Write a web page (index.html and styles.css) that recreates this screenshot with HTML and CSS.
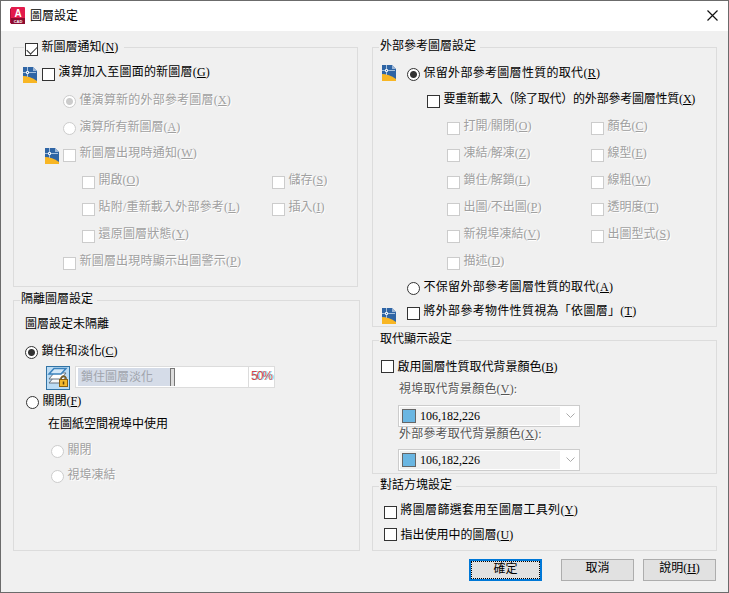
FILE: index.html
```html
<!DOCTYPE html>
<html lang="zh-Hant">
<head>
  <meta charset="UTF-8" />
  <title>圖層設定</title>
  <link rel="stylesheet" href="styles.css">
</head>
<body>
  <div class="dialog">
    <svg class="defs" width="0" height="0">
      <symbol id="dwg" viewBox="0 0 14 16">
        <path fill="#2f65a5" d="M0 0h10l4 4v11H0z"/>
        <path fill="#9db6d6" d="M10 0l4 4h-4z"/>
        <path fill="#f8b624" d="M0 9q7 0 14 5v2H0z"/>
        <path stroke="#a9c3df" fill="none" d="M4.500 0v4M4.500 7v3M0 5.500h3M6 5.500h7"/>
        <path stroke="#f2f6fa" fill="none" d="M3.500 4.500h2v2h-2z"/>
      </symbol>
    </svg>
    <div class="titlebar">
      <svg class="logo" width="15" height="17" viewBox="0 0 15 17">
        <path fill="#b50d3c" d="M0 2l2-2v17l-2-1z"/>
        <rect x="1" width="14" height="17" rx="1" fill="#e31b4c"/>
        <path fill="#8d0c30" d="M1 11h14v6H1z"/>
        <text x="8" y="9.500" class="logo-a">A</text>
        <text x="8" y="15.500" class="logo-cad">CAD</text>
      </svg>
      <span class="title">圖層設定</span>
      <svg class="close" width="11" height="11" viewBox="0 0 11 11"><path d="M.5.5l10 10M10.500.5l-10 10" stroke="#111" stroke-width="1.200"/></svg>
    </div>

    <div class="content">
      <div class="column">
        <div class="group notify">
          <label class="row legend"><i class="check on"></i><span>新圖層通知(<u>N</u>)</span></label>
          <label class="row in-icon"><svg class="dwg"><use href="#dwg"/></svg><i class="check"></i><span class="wide">演算加入至圖面的新圖層(<u>G</u>)</span></label>
          <label class="row in-2 off"><i class="radio on"></i><span class="wide">僅演算新的外部參考圖層(<u>X</u>)</span></label>
          <label class="row in-2 off"><i class="radio"></i><span>演算所有新圖層(<u>A</u>)</span></label>
          <label class="row in-icon-2 off"><svg class="dwg"><use href="#dwg"/></svg><i class="check"></i><span class="wide">新圖層出現時通知(<u>W</u>)</span></label>
          <div class="pair">
            <label class="row off"><i class="check"></i><span>開啟(<u>O</u>)</span></label>
            <label class="row off"><i class="check"></i><span>儲存(<u>S</u>)</span></label>
          </div>
          <div class="pair">
            <label class="row off"><i class="check"></i><span class="wide">貼附/重新載入外部參考(<u>L</u>)</span></label>
            <label class="row off"><i class="check"></i><span>插入(<u>I</u>)</span></label>
          </div>
          <div class="pair">
            <label class="row off"><i class="check"></i><span class="wide">還原圖層狀態(<u>Y</u>)</span></label>
          </div>
          <label class="row in-2 off"><i class="check"></i><span class="wide">新圖層出現時顯示出圖警示(<u>P</u>)</span></label>
        </div>

        <div class="group isolate">
          <div class="row legend"><span>隔離圖層設定</span></div>
          <div class="row status"><span>圖層設定未隔離</span></div>
          <label class="row in-1"><i class="radio on"></i><span>鎖住和淡化(<u>C</u>)</span></label>
          <div class="fade">
            <div class="lock">
              <svg width="22" height="22" viewBox="0 0 22 22">
                <path d="M7 10h12l-5 6H2z" fill="#f4f6f8" stroke="#68737e"/>
                <path d="M7 6h12l-5 6H2z" fill="#fff" stroke="#68737e"/>
                <path d="M7 1.500h12l-5 5.500H2z" fill="#d4e8f8" stroke="#3b82bd" stroke-width="1.500"/>
                <path d="M14 13v-2q2.500-4 5 0v2" fill="none" stroke="#765b22" stroke-width="1.500"/>
                <rect x="12.500" y="12.500" width="8" height="7" fill="#f4b92f" stroke="#8c6010"/>
                <path d="M16.500 14.500v3" stroke="#5b4313" stroke-width="1.500"/>
              </svg>
            </div>
            <div class="slider"><div class="fill">鎖住圖層淡化</div><div class="thumb"></div></div>
            <div class="percent">50%</div>
          </div>
          <label class="row in-1b"><i class="radio"></i><span>關閉(<u>F</u>)</span></label>
          <div class="row viewport"><span>在圖紙空間視埠中使用</span></div>
          <label class="row in-vp off"><i class="radio"></i><span>關閉</span></label>
          <label class="row in-vp off"><i class="radio"></i><span>視埠凍結</span></label>
        </div>
      </div>

      <div class="column">
        <div class="group xref">
          <div class="row legend"><span>外部參考圖層設定</span></div>
          <label class="row in-icon"><svg class="dwg"><use href="#dwg"/></svg><i class="radio on"></i><span class="wider">保留外部參考圖層性質的取代(<u>R</u>)</span></label>
          <label class="row reload"><i class="check"></i><span class="tight">要重新載入（除了取代）的外部參考圖層性質(<u>X</u>)</span></label>
          <div class="pair">
            <label class="row off"><i class="check"></i><span>打開/關閉(<u>O</u>)</span></label>
            <label class="row off"><i class="check"></i><span>顏色(<u>C</u>)</span></label>
          </div>
          <div class="pair">
            <label class="row off"><i class="check"></i><span>凍結/解凍(<u>Z</u>)</span></label>
            <label class="row off"><i class="check"></i><span>線型(<u>E</u>)</span></label>
          </div>
          <div class="pair">
            <label class="row off"><i class="check"></i><span>鎖住/解鎖(<u>L</u>)</span></label>
            <label class="row off"><i class="check"></i><span>線粗(<u>W</u>)</span></label>
          </div>
          <div class="pair">
            <label class="row off"><i class="check"></i><span>出圖/不出圖(<u>P</u>)</span></label>
            <label class="row off"><i class="check"></i><span>透明度(<u>T</u>)</span></label>
          </div>
          <div class="pair">
            <label class="row off"><i class="check"></i><span>新視埠凍結(<u>V</u>)</span></label>
            <label class="row off"><i class="check"></i><span>出圖型式(<u>S</u>)</span></label>
          </div>
          <div class="pair">
            <label class="row off"><i class="check"></i><span>描述(<u>D</u>)</span></label>
          </div>
          <label class="row keep"><i class="radio"></i><span class="wider">不保留外部參考圖層性質的取代(<u>A</u>)</span></label>
          <label class="row in-icon"><svg class="dwg low"><use href="#dwg"/></svg><i class="check"></i><span class="wider">將外部參考物件性質視為「依圖層」(<u>T</u>)</span></label>
        </div>

        <div class="group override">
          <div class="row legend"><span>取代顯示設定</span></div>
          <label class="row enable"><i class="check up"></i><span>啟用圖層性質取代背景顏色(<u>B</u>)</span></label>
          <div class="row caption"><span class="wide">視埠取代背景顏色(<u>V</u>):</span></div>
          <div class="combo"><i class="swatch"></i><span class="value">106,182,226</span><svg width="9" height="6" viewBox="0 0 9 6"><path d="M.5.5l4 4 4-4" fill="none" stroke="#aaa"/></svg></div>
          <div class="row caption"><span class="wide">外部參考取代背景顏色(<u>X</u>):</span></div>
          <div class="combo"><i class="swatch"></i><span class="value">106,182,226</span><svg width="9" height="6" viewBox="0 0 9 6"><path d="M.5.5l4 4 4-4" fill="none" stroke="#aaa"/></svg></div>
        </div>

        <div class="group dialog-set">
          <div class="row legend"><span>對話方塊設定</span></div>
          <label class="row in-dlg"><i class="check"></i><span class="wider">將圖層篩選套用至圖層工具列(<u>Y</u>)</span></label>
          <label class="row in-dlg"><i class="check up"></i><span>指出使用中的圖層(<u>U</u>)</span></label>
        </div>
      </div>
    </div>

    <div class="buttons">
      <button class="btn primary">確定</button>
      <button class="btn">取消</button>
      <button class="btn help">說明(<u>H</u>)</button>
    </div>
  </div>
</body>
</html>
```
FILE: styles.css
```css
* {
  box-sizing: border-box;
}
body {
  margin: 0;
  font-family: "Liberation Serif", "Noto Sans CJK TC", serif;
  font-size: 12px;
  line-height: 16px;
  color: #000;
  overflow: hidden;
}
.defs {
  display: block;
}
.dialog {
  width: 729px;
  height: 593px;
  border: 1px solid #6b6b6b;
  background: #f0f0f0;
}

/* title bar */
.titlebar {
  display: flex;
  align-items: flex-start;
  height: 30px;
  padding: 6px 10px 0 9px;
  background: #fff;
}
.title {
  flex: 1;
  margin: 1px 0 0 5px;
}
.close {
  margin-top: 3px;
}
.logo-a {
  font: bold 10px "Liberation Sans", sans-serif;
  fill: #fff;
  text-anchor: middle;
}
.logo-cad {
  font: bold 4px "Liberation Sans", sans-serif;
  fill: #fff;
  text-anchor: middle;
}

/* columns and group boxes */
.content {
  display: flex;
  gap: 12px;
  height: 520px;
  padding: 16px 11px 0 12px;
}
.column {
  display: flex;
  flex-direction: column;
  flex: none;
  width: 347px;
  gap: 13px;
}
.column + .column {
  width: 345px;
}
.group {
  display: grid;
  border: 1px solid #dcdcdc;
  align-content: start;
}
.notify {
  width: 345px;
  height: 240px;
  grid-template-rows: 16px 28px 27px 26px 27px 27px 27px 27px 16px;
}
.isolate {
  height: 251px;
  grid-template-rows: 15px 27px 23px 27px 23px 26px 25px 16px;
}
.xref {
  height: 280px;
  grid-template-rows: 17px 26px 27px 27px 27px 27px 27px 27px 26px 24px 16px;
}
.override {
  height: 134px;
  grid-template-rows: 18px 22px 24px 21px 23px 22px;
}
.dialog-set {
  height: 65px;
  margin-top: -1px;
  grid-template-rows: 15px 25px 16px;
}

/* option rows */
.row {
  display: flex;
  align-items: flex-start;
  height: 16px;
  white-space: nowrap;
}
.wide {
  letter-spacing: 0.2px;
}
.wider {
  letter-spacing: 0.3px;
}
.tight {
  letter-spacing: -0.22px;
}
.legend {
  justify-self: start;
  height: 16px;
  margin: -10px 0 0 6px;
  padding: 0 4px 0 1px;
  background: #f0f0f0;
}
.notify .legend {
  margin: -9px 0 0 10px;
  padding-right: 6px;
}
.in-icon { padding-left: 9px; }
.in-icon-2 { padding-left: 31px; }
.in-2 { padding-left: 49px; }
.in-1 { padding-left: 11px; }
.in-1b { padding-left: 12px; }
.in-vp { padding-left: 37px; }
.in-dlg { padding-left: 11px; }
.status { padding-left: 11px; }
.viewport { padding-left: 34px; }
.reload { padding-left: 54px; }
.keep { padding-left: 34px; }
.enable { padding-left: 8px; }
.caption {
  padding-left: 26px;
  color: #555;
  text-shadow: 1px 1px #fff;
}
.off {
  color: #a0a0a0;
  text-shadow: 1px 1px #fff;
}
.pair {
  display: grid;
  grid-template-columns: 190px 1fr;
  padding-left: 68px;
}
.xref .pair {
  grid-template-columns: 144px 1fr;
  padding-left: 74px;
}
u {
  text-underline-offset: 1px;
}

/* check boxes and radio buttons */
.check,
.radio {
  flex: none;
  width: 13px;
  height: 13px;
  margin: 4px 3.500px 0 0;
  border: 1px solid #333;
  background: #fff;
}
.radio {
  margin-top: 3px;
  border-radius: 50%;
}
.check.up {
  margin-top: 1px;
}
.off .check,
.off .radio {
  border-color: #ccc;
}
.check.on::after {
  content: "";
  display: block;
  width: 9px;
  height: 5px;
  margin: 2px 0 0 1px;
  border: solid #333;
  border-width: 0 0 1.300px 1.300px;
  transform: rotate(-45deg);
}
.radio.on {
  background: radial-gradient(circle, #333 3px, #fff 4px);
}
.off .radio.on {
  background: radial-gradient(circle, #ccc 3px, #fff 4px);
}
.dwg {
  flex: none;
  width: 14px;
  height: 16px;
  margin: 3px 5px 0 0;
}
.xref .dwg {
  margin: 0 11px 0 0;
}
.xref .dwg.low {
  margin-top: 5px;
}
.in-icon-2 .dwg {
  margin-right: 4px;
}

/* fade slider */
.fade {
  display: flex;
  padding-left: 32px;
}
.lock {
  width: 24px;
  height: 24px;
  border: 1px solid #3173a5;
  background: #bcdcf4;
}
.slider {
  display: flex;
  width: 174px;
  height: 22px;
  margin-left: 5px;
  padding: 1px;
  border: 1px solid #dcdcdc;
  background: #fff;
}
.fill {
  width: 92px;
  margin-left: 1px;
  padding-left: 3px;
  line-height: 18px;
  background: #d5dce8;
  color: #a0a4ac;
}
.thumb {
  width: 5px;
  border: 1px solid #777;
  border-bottom: 0;
  background: #ddd;
}
.percent {
  width: 26px;
  height: 22px;
  padding-left: 2px;
  border: 1px solid #dcdcdc;
  border-left: 0;
  background: #fff;
  color: #d0444c;
  font: 12px/18px "Liberation Sans", sans-serif;
  letter-spacing: -1px;
  text-shadow: 1px 0 #70e4e8;
}

/* colour lists */
.combo {
  display: flex;
  align-items: center;
  width: 182px;
  height: 22px;
  margin-left: 25px;
  padding: 1px 4px 1px 1px;
  border: 1px solid #ccc;
  background: linear-gradient(#f0f0f0, #f0f0f0) 1px 1px / 160px 18px no-repeat #fff;
}
.swatch {
  width: 14px;
  height: 14px;
  margin-left: 2px;
  border: 1px solid #666;
  background: #6ab6e2;
}
.value {
  flex: 1;
  margin-left: 4px;
}

/* bottom buttons */
.buttons {
  display: flex;
  justify-content: flex-end;
  padding: 8px 12px 0 0;
}
.btn {
  width: 73px;
  height: 22px;
  margin-right: 9px;
  padding: 0 0 3px;
  border: 1px solid #adadad;
  background: #e1e1e1;
  font: inherit;
  line-height: 17px;
}
.btn.primary {
  margin-right: 19px;
  border: 2px solid #0078d7;
  outline: 1px dotted #000;
  outline-offset: -3px;
}
.btn.help {
  margin-right: 0;
}
```
